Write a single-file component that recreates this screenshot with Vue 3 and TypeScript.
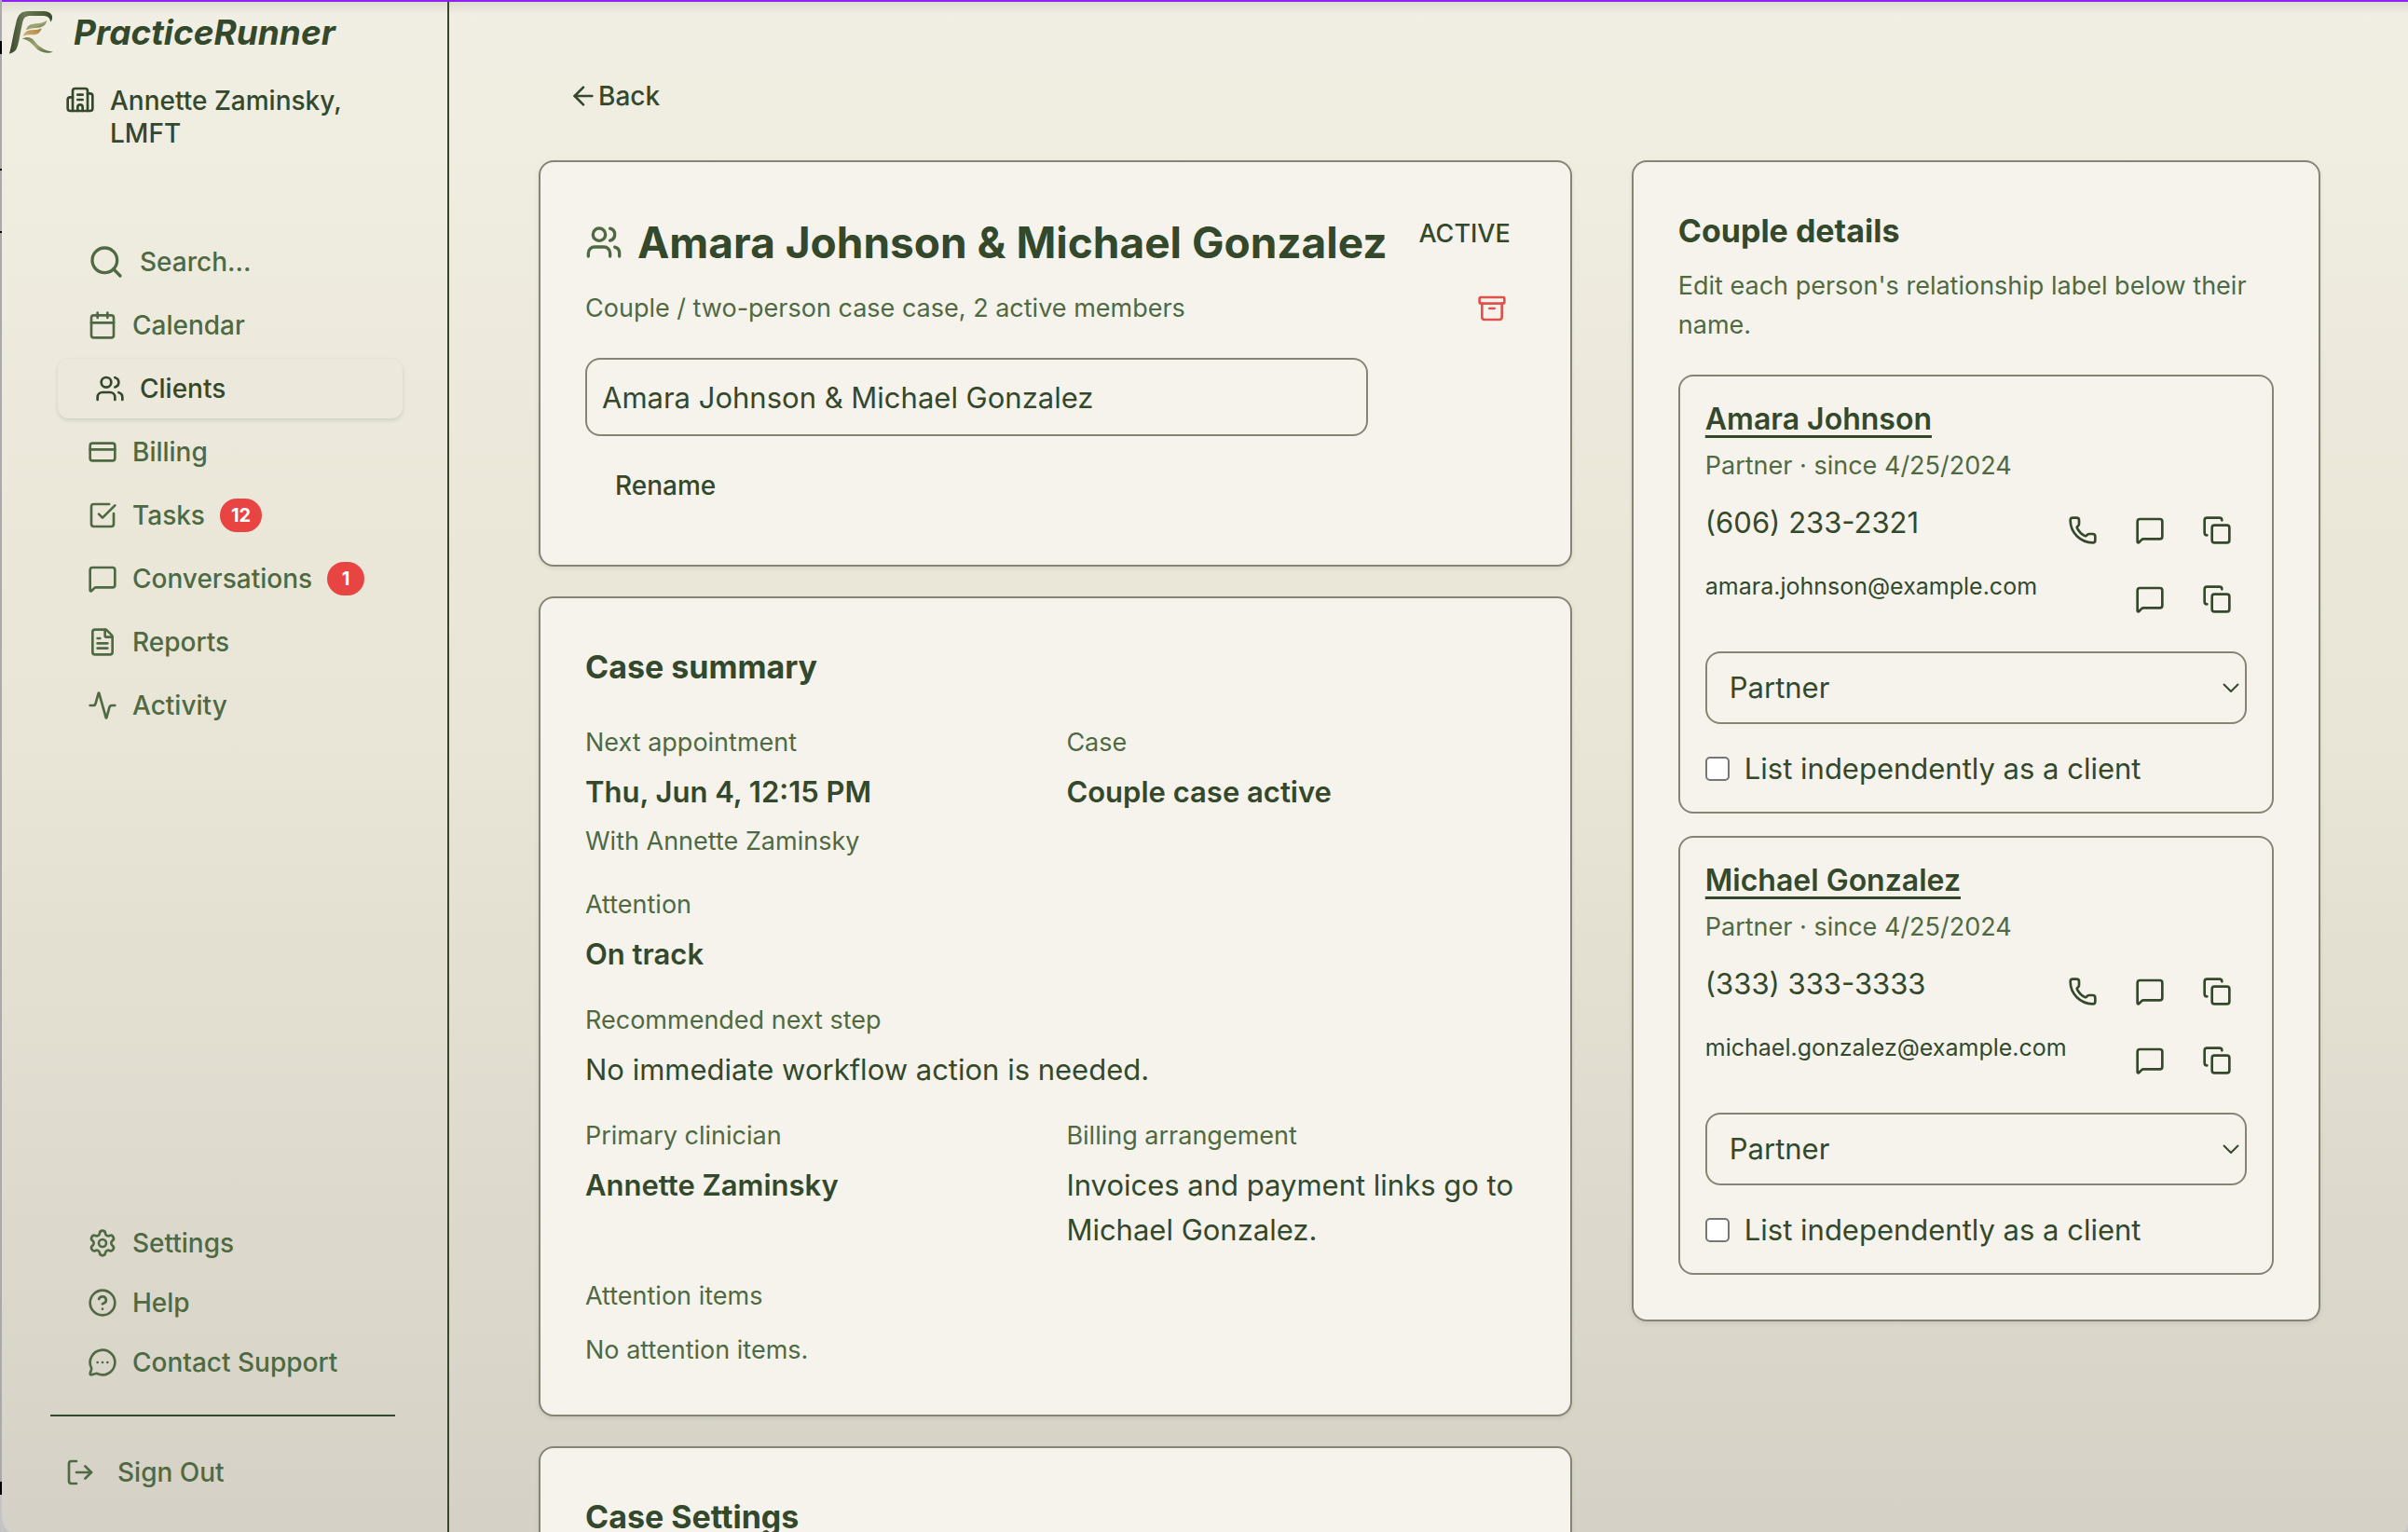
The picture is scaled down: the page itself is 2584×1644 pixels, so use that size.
<script setup lang="ts">
import { h, ref } from 'vue'

const glyphs: Record<string, string[]> = {
  building: [
    'M10 12h4', 'M10 8h4', 'M14 21v-3a2 2 0 0 0-4 0v3',
    'M6 10H4a2 2 0 0 0-2 2v7a2 2 0 0 0 2 2h16a2 2 0 0 0 2-2V9a2 2 0 0 0-2-2h-2',
    'M6 21V5a2 2 0 0 1 2-2h8a2 2 0 0 1 2 2v16',
  ],
  search: ['M3 11a8 8 0 1 0 16 0a8 8 0 1 0-16 0', 'm21 21-4.34-4.34'],
  calendar: ['M8 2v4', 'M16 2v4', 'M5 4h14a2 2 0 0 1 2 2v14a2 2 0 0 1-2 2H5a2 2 0 0 1-2-2V6a2 2 0 0 1 2-2z', 'M3 10h18'],
  users: [
    'M16 21v-2a4 4 0 0 0-4-4H6a4 4 0 0 0-4 4v2', 'M5 7a4 4 0 1 0 8 0a4 4 0 1 0-8 0',
    'M22 21v-2a4 4 0 0 0-3-3.87', 'M16 3.13a4 4 0 0 1 0 7.75',
  ],
  card: ['M4 5h16a2 2 0 0 1 2 2v10a2 2 0 0 1-2 2H4a2 2 0 0 1-2-2V7a2 2 0 0 1 2-2z', 'M2 10h20'],
  check: ['M21 10.656V19a2 2 0 0 1-2 2H5a2 2 0 0 1-2-2V5a2 2 0 0 1 2-2h12.344', 'm9 11 3 3L22 4'],
  message: ['M22 17a2 2 0 0 1-2 2H6.828a2 2 0 0 0-1.414.586l-2.202 2.202A.71.71 0 0 1 2 21.286V5a2 2 0 0 1 2-2h16a2 2 0 0 1 2 2z'],
  file: [
    'M6 22a2 2 0 0 1-2-2V4a2 2 0 0 1 2-2h8a2.4 2.4 0 0 1 1.704.706l3.588 3.588A2.4 2.4 0 0 1 20 8v12a2 2 0 0 1-2 2z',
    'M14 2v5a1 1 0 0 0 1 1h5', 'M10 9H8', 'M16 13H8', 'M16 17H8',
  ],
  activity: ['M22 12h-2.48a2 2 0 0 0-1.93 1.46l-2.35 8.36a.25.25 0 0 1-.48 0L9.24 2.18a.25.25 0 0 0-.48 0l-2.35 8.36A2 2 0 0 1 4.49 12H2'],
  settings: [
    'M9.671 4.136a2.34 2.34 0 0 1 4.659 0 2.34 2.34 0 0 0 3.319 1.915 2.34 2.34 0 0 1 2.33 4.033 2.34 2.34 0 0 0 0 3.831 2.34 2.34 0 0 1-2.33 4.033 2.34 2.34 0 0 0-3.319 1.915 2.34 2.34 0 0 1-4.659 0 2.34 2.34 0 0 0-3.32-1.915 2.34 2.34 0 0 1-2.33-4.033 2.34 2.34 0 0 0 0-3.831A2.34 2.34 0 0 1 6.35 6.051a2.34 2.34 0 0 0 3.319-1.915',
    'M9 12a3 3 0 1 0 6 0a3 3 0 1 0-6 0',
  ],
  help: ['M2 12a10 10 0 1 0 20 0a10 10 0 1 0-20 0', 'M9.09 9a3 3 0 0 1 5.83 1c0 2-3 3-3 3', 'M12 17h.01'],
  support: [
    'M2.992 16.342a2 2 0 0 1 .094 1.167l-1.065 3.29a1 1 0 0 0 1.236 1.168l3.413-.998a2 2 0 0 1 1.099.092 10 10 0 1 0-4.777-4.719',
    'M8 12h.01', 'M12 12h.01', 'M16 12h.01',
  ],
  logout: ['m16 17 5-5-5-5', 'M21 12H9', 'M9 21H5a2 2 0 0 1-2-2V5a2 2 0 0 1 2-2h4'],
  back: ['m12 19-7-7 7-7', 'M19 12H5'],
  archive: ['M3 3h18a1 1 0 0 1 1 1v3a1 1 0 0 1-1 1H3a1 1 0 0 1-1-1V4a1 1 0 0 1 1-1z', 'M4 8v11a2 2 0 0 0 2 2h12a2 2 0 0 0 2-2V8', 'M10 12h4'],
  phone: ['M13.832 16.568a1 1 0 0 0 1.213-.303l.355-.465A2 2 0 0 1 17 15h3a2 2 0 0 1 2 2v3a2 2 0 0 1-2 2A18 18 0 0 1 2 4a2 2 0 0 1 2-2h3a2 2 0 0 1 2 2v3a2 2 0 0 1-.8 1.6l-.468.351a1 1 0 0 0-.292 1.233 14 14 0 0 0 6.392 6.384'],
  copy: ['M10 8h10a2 2 0 0 1 2 2v10a2 2 0 0 1-2 2H10a2 2 0 0 1-2-2V10a2 2 0 0 1 2-2z', 'M4 16c-1.1 0-2-.9-2-2V4c0-1.1.9-2 2-2h10c1.1 0 2 .9 2 2'],
}

const Icon = (props: { name: string; size?: number }) =>
  h(
    'svg',
    {
      width: props.size ?? 32,
      height: props.size ?? 32,
      viewBox: '0 0 24 24',
      fill: 'none',
      stroke: 'currentColor',
      'stroke-width': 2,
      'stroke-linecap': 'round',
      'stroke-linejoin': 'round',
      'aria-hidden': 'true',
      class: 'icon',
    },
    glyphs[props.name].map((d) => h('path', { d })),
  )
Icon.props = ['name', 'size']

interface NavItem { label: string; icon: string; size?: number; badge?: number; active?: boolean }

const mainNav: NavItem[] = [
  { label: 'Search...', icon: 'search', size: 40 },
  { label: 'Calendar', icon: 'calendar' },
  { label: 'Clients', icon: 'users', active: true },
  { label: 'Billing', icon: 'card' },
  { label: 'Tasks', icon: 'check', badge: 12 },
  { label: 'Conversations', icon: 'message', badge: 1 },
  { label: 'Reports', icon: 'file' },
  { label: 'Activity', icon: 'activity' },
]

const footerNav: NavItem[] = [
  { label: 'Settings', icon: 'settings' },
  { label: 'Help', icon: 'help' },
  { label: 'Contact Support', icon: 'support' },
]

const caseName = ref('Amara Johnson & Michael Gonzalez')

const members = ref([
  { id: 'amara', name: 'Amara Johnson', phone: '(606) 233-2321', email: 'amara.johnson@example.com', role: 'Partner', independent: false },
  { id: 'michael', name: 'Michael Gonzalez', phone: '(333) 333-3333', email: 'michael.gonzalez@example.com', role: 'Partner', independent: false },
])
</script>

<template>
  <div class="backdrop">
    <div class="window">
      <aside class="sidebar">
        <a class="brand" href="#">
          <svg class="brand-mark" viewBox="0 0 144 144" aria-hidden="true">
            <defs>
              <linearGradient id="stem" x1="0" y1="0" x2="1" y2="0">
                <stop offset="0" stop-color="#34462b" />
                <stop offset="0.35" stop-color="#6c7a52" />
                <stop offset="0.7" stop-color="#53653c" />
                <stop offset="1" stop-color="#3a4a2c" />
              </linearGradient>
              <linearGradient id="leaf" x1="0" y1="0" x2="1" y2="1">
                <stop offset="0" stop-color="#6f8150" />
                <stop offset="0.5" stop-color="#a0a672" />
                <stop offset="1" stop-color="#4c6038" />
              </linearGradient>
              <linearGradient id="gold" x1="0" y1="1" x2="1" y2="0">
                <stop offset="0" stop-color="#d9b273" />
                <stop offset="1" stop-color="#a5823f" />
              </linearGradient>
            </defs>
            <path fill="url(#stem)" d="M0 140 C8 112 12 78 22 40 C27 14 38 3 62 3 L112 3 C130 3 141 14 138 28 Q137 34 132 38 C132 25 124 18 108 18 L68 18 C52 18 46 24 42 42 C34 76 32 104 24 122 C20 132 12 136 0 140 Z" />
            <path fill="url(#leaf)" d="M54 64 C58 48 70 45 88 43 C102 42 112 39 121 33 C118 50 104 56 86 57 C72 58 62 60 54 64 Z" />
            <path fill="url(#gold)" d="M44 84 C50 68 60 64 76 64 C88 64 96 62 104 58 C100 74 90 79 74 79 C62 79 52 80 44 84 Z" />
            <path fill="url(#leaf)" d="M41 92 C56 84 70 86 80 98 C94 116 112 130 141 134 C120 141 98 136 84 120 C68 102 60 94 41 92 Z" />
          </svg>
          <span class="brand-name">PracticeRunner</span>
        </a>
        <div class="practice">
          <Icon name="building" />
          <span>Annette Zaminsky, LMFT</span>
        </div>
        <nav class="nav" aria-label="Main">
          <a v-for="item in mainNav" :key="item.label" href="#" class="nav-item" :class="{ active: item.active }">
            <Icon :name="item.icon" :size="item.size" />
            <span>{{ item.label }}</span>
            <span v-if="item.badge" class="badge">{{ item.badge }}</span>
          </a>
        </nav>
        <nav class="nav nav-footer" aria-label="Support">
          <a v-for="item in footerNav" :key="item.label" href="#" class="nav-item">
            <Icon :name="item.icon" />
            <span>{{ item.label }}</span>
          </a>
        </nav>
        <hr class="divider" />
        <button type="button" class="sign-out">
          <Icon name="logout" />
          <span>Sign Out</span>
        </button>
      </aside>

      <main class="content">
        <button type="button" class="btn back"><Icon name="back" />Back</button>
        <div class="columns">
          <div class="column">
            <section class="card case-head">
              <div class="case-main">
                <div class="case-title">
                  <Icon name="users" :size="40" />
                  <h1>{{ caseName }}</h1>
                </div>
                <p class="muted">Couple / two-person case case, 2 active members</p>
                <form class="rename" @submit.prevent>
                  <input v-model="caseName" class="field" type="text" aria-label="Case name" />
                  <button type="submit" class="btn">Rename</button>
                </form>
              </div>
              <div class="case-side">
                <span class="status">ACTIVE</span>
                <button type="button" class="archive" aria-label="Archive case"><Icon name="archive" /></button>
              </div>
            </section>

            <section class="card">
              <h2>Case summary</h2>
              <dl class="summary">
                <div class="item">
                  <dt>Next appointment</dt>
                  <dd class="strong">Thu, Jun 4, 12:15 PM</dd>
                  <dd class="muted">With Annette Zaminsky</dd>
                </div>
                <div class="item">
                  <dt>Case</dt>
                  <dd class="strong">Couple case active</dd>
                </div>
                <div class="item wide">
                  <dt>Attention</dt>
                  <dd class="strong">On track</dd>
                </div>
                <div class="item wide">
                  <dt>Recommended next step</dt>
                  <dd>No immediate workflow action is needed.</dd>
                </div>
                <div class="item">
                  <dt>Primary clinician</dt>
                  <dd class="strong">Annette Zaminsky</dd>
                </div>
                <div class="item">
                  <dt>Billing arrangement</dt>
                  <dd>Invoices and payment links go to Michael Gonzalez.</dd>
                </div>
                <div class="item wide loose">
                  <dt>Attention items</dt>
                  <dd class="muted">No attention items.</dd>
                </div>
              </dl>
            </section>

            <section class="card">
              <h2>Case Settings</h2>
            </section>
          </div>

          <section class="card details">
            <h2>Couple details</h2>
            <p class="muted intro">Edit each person's relationship label below their name.</p>
            <div class="members">
              <article v-for="m in members" :key="m.id" class="member">
                <a href="#" class="member-name">{{ m.name }}</a>
                <p class="muted">Partner · since 4/25/2024</p>
                <div class="contacts">
                  <div class="contact">
                    <span>{{ m.phone }}</span>
                    <div class="actions">
                      <button type="button" :aria-label="`Call ${m.name}`"><Icon name="phone" /></button>
                      <button type="button" :aria-label="`Text ${m.name}`"><Icon name="message" /></button>
                      <button type="button" :aria-label="`Copy phone of ${m.name}`"><Icon name="copy" /></button>
                    </div>
                  </div>
                  <div class="contact">
                    <span class="email">{{ m.email }}</span>
                    <div class="actions">
                      <button type="button" :aria-label="`Email ${m.name}`"><Icon name="message" /></button>
                      <button type="button" :aria-label="`Copy email of ${m.name}`"><Icon name="copy" /></button>
                    </div>
                  </div>
                </div>
                <div class="select">
                  <select v-model="m.role" :aria-label="`Relationship label for ${m.name}`">
                    <option>Partner</option>
                    <option>Spouse</option>
                  </select>
                  <svg class="chevron" width="18" height="10" viewBox="0 0 18 10" fill="none" stroke="currentColor" stroke-width="2" aria-hidden="true">
                    <path d="m1 1 8 8 8-8" />
                  </svg>
                </div>
                <label class="tick" :for="`independent-${m.id}`">
                  <input :id="`independent-${m.id}`" v-model="m.independent" type="checkbox" />
                  List independently as a client
                </label>
              </article>
            </div>
          </section>
        </div>
      </main>
    </div>
  </div>
</template>

<style>
body {
  margin: 0;
}
</style>

<style scoped>
.backdrop {
  --ink: #34482b;
  --muted: #4f6a43;
  --line: #878476;
  --card: #f6f3ec;
  box-sizing: border-box;
  height: 100vh;
  padding-left: 2px;
  overflow: hidden;
  background: linear-gradient(
    #a9a9ae 44px, #000 44px, #000 58px, #a9a9ae 58px, #a9a9ae 181px, #000 181px, #000 183px, #a9a9ae 183px,
    #a9a9ae 248px, #000 248px, #000 250px, #a9a9ae 250px, #a9a9ae 1590px, #000 1590px, #000 1604px, #c4c4c6 1604px
  );
  font-family: Inter, "Noto Sans", sans-serif;
  font-size: 31px;
  line-height: 48px;
  color: var(--ink);
}
.backdrop *,
.backdrop *::before {
  box-sizing: border-box;
}
.icon {
  flex: none;
}
.window {
  display: flex;
  height: 100%;
  overflow: hidden;
  border-top: 2px solid #9020f0;
  border-radius: 0 0 7px 10px / 0 0 8px 20px;
  background: linear-gradient(rgb(0 0 0 / 8%), transparent 14px), linear-gradient(#f1eee3, #e8e5d6 50%, #d5d1c6);
}
h1,
h2,
p,
dl,
dd {
  margin: 0;
}
button,
input,
select {
  font: inherit;
  color: inherit;
}
button {
  padding: 0;
  border: 0;
  background: none;
}

.sidebar {
  display: flex;
  flex: none;
  flex-direction: column;
  width: 480px;
  padding-bottom: 32px;
  border-right: 2px solid var(--ink);
  font-size: 28px;
  font-weight: 500;
}
.brand {
  display: flex;
  align-items: center;
  gap: 21px;
  height: 66px;
  padding-left: 8px;
  color: inherit;
  text-decoration: none;
}
.brand-mark {
  flex: none;
  width: 48px;
  height: 48px;
}
.brand-name {
  font-size: 37px;
  font-style: italic;
  font-weight: 700;
}
.practice {
  display: flex;
  gap: 16px;
  margin: 23px 64px 0 68px;
  line-height: 35px;
}
.nav {
  display: flex;
  flex-direction: column;
  gap: 4px;
  margin: 88px 48px 0 60px;
}
.nav-item {
  display: flex;
  align-items: center;
  gap: 16px;
  height: 64px;
  padding: 0 32px;
  border-radius: 12px;
  color: var(--muted);
  text-decoration: none;
}
.nav-item.active {
  padding: 0 40px;
  background: #ece8dc;
  box-shadow: 0 2px 4px rgb(52 72 43 / 16%);
  color: var(--ink);
}
.badge {
  min-width: 40px;
  padding: 0 12px;
  border-radius: 18px;
  background: #e84441;
  font-size: 20px;
  font-weight: 700;
  line-height: 36px;
  text-align: center;
  color: #fff;
}
.nav-footer {
  gap: 0;
  margin-top: auto;
}
.divider {
  width: 370px;
  height: 2px;
  margin: 24px 0 28px 52px;
  border: 0;
  background: var(--ink);
}
.sign-out {
  display: flex;
  align-items: center;
  gap: 24px;
  height: 64px;
  padding-left: 68px;
  color: var(--muted);
}

.content {
  flex: 1;
  min-width: 0;
  padding: 64px 94px 0 96px;
  overflow: hidden;
}
.btn {
  display: flex;
  align-items: center;
  height: 74px;
  padding: 0 32px;
  font-size: 28px;
  font-weight: 500;
}
.columns {
  display: grid;
  grid-template-columns: minmax(0, 3fr) minmax(0, 2fr);
  gap: 64px;
  align-items: start;
  margin-top: 32px;
}
.column {
  display: flex;
  flex-direction: column;
  gap: 32px;
}
.card {
  padding: 48px;
  border: 2px solid var(--line);
  border-radius: 16px;
  background: var(--card);
  box-shadow: 0 2px 4px rgb(52 72 43 / 10%);
}
h2 {
  font-size: 34px;
  font-weight: 700;
  line-height: 52px;
}
.muted,
dt {
  font-size: 27px;
  line-height: 42px;
  color: var(--muted);
}
.case-head {
  display: flex;
  justify-content: space-between;
}
.case-main {
  flex: 1;
  max-width: 864px;
}
.case-title {
  display: flex;
  align-items: center;
  gap: 16px;
  margin: 8px 0 20px;
  color: var(--muted);
}
h1 {
  font-size: 46px;
  font-weight: 700;
  line-height: 60px;
  white-space: nowrap;
  color: var(--ink);
}
.rename {
  display: flex;
  flex-direction: column;
  align-items: flex-start;
  gap: 16px;
  margin-top: 32px;
}
.field {
  width: 100%;
  max-width: 840px;
  height: 84px;
  padding: 0 16px;
  border: 2px solid var(--line);
  border-radius: 16px;
  background: transparent;
}
.case-side {
  display: flex;
  flex-direction: column;
  align-items: flex-end;
  gap: 16px;
}
.status {
  padding: 0 16px;
  font-size: 27px;
  font-weight: 500;
  line-height: 57px;
}
.archive {
  display: grid;
  place-items: center;
  width: 72px;
  height: 72px;
  color: #e0524c;
}
.summary {
  display: grid;
  grid-template-columns: minmax(0, 1fr) minmax(0, 1fr);
  gap: 26px 24px;
  margin-top: 34px;
}
.item {
  display: flex;
  flex-direction: column;
  gap: 8px;
}
.wide {
  grid-column: 1 / -1;
}
.loose {
  gap: 16px;
}
.strong {
  font-weight: 600;
}

.intro {
  margin-top: 12px;
}
.members {
  display: flex;
  flex-direction: column;
  gap: 24px;
  margin-top: 32px;
}
.member {
  display: flex;
  flex-direction: column;
  padding: 22px 27px;
  border: 2px solid var(--line);
  border-radius: 16px;
}
.member-name {
  align-self: flex-start;
  margin-bottom: 5px;
  font-size: 32px;
  font-weight: 600;
  color: inherit;
  text-decoration: underline;
  text-decoration-thickness: 3px;
  text-underline-offset: 6px;
}
.contacts {
  display: flex;
  flex-direction: column;
  gap: 10px;
  margin-top: 16px;
}
.contact {
  display: flex;
  justify-content: space-between;
}
.email {
  font-size: 25px;
  line-height: 36px;
}
.actions {
  display: flex;
  gap: 8px;
}
.actions button {
  display: grid;
  place-items: center;
  width: 64px;
  height: 64px;
}
.select {
  position: relative;
  margin: 24px 0;
}
.select select {
  display: block;
  width: 100%;
  height: 78px;
  padding: 0 24px;
  border: 2px solid var(--line);
  border-radius: 16px;
  background: transparent;
  appearance: none;
}
.chevron {
  position: absolute;
  top: 34px;
  right: 8px;
  pointer-events: none;
}
.tick {
  display: flex;
  align-items: center;
  gap: 16px;
}
.tick input {
  width: 26px;
  height: 26px;
  margin: 0;
  border: 2px solid #767676;
  border-radius: 5px;
  background: #fff;
  appearance: none;
}
.tick input:checked {
  background: var(--ink);
}
</style>
